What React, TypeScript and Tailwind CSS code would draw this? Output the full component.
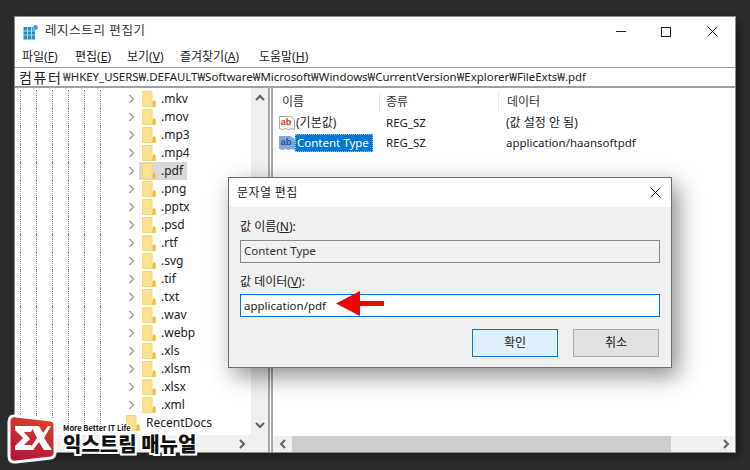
const treeItems = [".mkv", ".mov", ".mp3", ".mp4", ".pdf", ".png", ".pptx", ".psd", ".rtf", ".svg", ".tif", ".txt", ".wav", ".webp", ".xls", ".xlsm", ".xlsx", ".xml"];

const menus = [
    { label: "파일(", key: "F", width: "w-[53px]" },
    { label: "편집(", key: "E", width: "w-[52px]" },
    { label: "보기(", key: "V", width: "w-[53px]" },
    { label: "즐겨찾기(", key: "A", width: "w-[79px]" },
    { label: "도움말(", key: "H", width: "w-[60px]" },
];

const RegIcon = () => (
    <svg width="16" height="16" viewBox="0 0 16 16" className="shrink-0">
        <rect x="0.5" y="3" width="11.5" height="12.5" fill="#1c8fc4" />
        <path d="M0.5 7h11.5M0.5 11h11.5M4.5 3v12.5M8.5 3v12.5" stroke="#cfeaf6" strokeWidth="0.8" />
        <path d="M12.5 0.5l2.5 1.6v2.8l-2.5 1.6-2.5-1.6V2.1z" fill="#3aa7d4" stroke="#fff" strokeWidth="0.5" />
    </svg>
);

const Folder = () => (
    <svg width="14" height="16" viewBox="0 0 14 16" className="shrink-0">
        <path d="M0.5 0.5h9.5l0 11h3.5v4h-13z" fill="#fde28f" stroke="#f5d77e" />
        <path d="M10 15.5h3.5V9.5H11z" fill="#e9bf4f" />
    </svg>
);

const Chevron = () => (
    <svg width="8" height="10" viewBox="0 0 8 10" className="shrink-0">
        <path d="M1.5 1l4 4-4 4" fill="none" stroke="#a6a6a6" strokeWidth="1.6" />
    </svg>
);

const Guides = ({ count }: { count: number }) => (
    <>
        {Array.from({ length: count }).map((_, i) => (
            <span key={i} className="h-full w-4 shrink-0 border-l border-dotted border-[#8a8a8a]" />
        ))}
    </>
);

const TreeRow = ({ name }: { name: string }) => (
    <div className="flex h-[18px] items-center pl-[5px]">
        <Guides count={6} />
        <span className="h-full w-[12px] shrink-0" />
        <Chevron />
        <span className="w-[3px] shrink-0" />
        <div className={`flex h-full items-center pl-[3px] pr-[4px] ${name === ".pdf" ? "bg-[#d9d9d9]" : ""}`}>
            <Folder />
            <span className="ml-[5px] text-[12px] text-[#222]">{name}</span>
        </div>
    </div>
);

const AbIcon = ({ selected }: { selected?: boolean }) => (
    <svg width="16" height="16" viewBox="0 0 16 16" className="shrink-0">
        <path d="M0.5 1.5h11l4 3v10l-3-1-3 1-3-1-3 1-3-1z" fill={selected ? "#7fa8d8" : "#fff"} stroke={selected ? "#7fa8d8" : "#a8a8a8"} />
        <text x="1.5" y="10" fontSize="9.5" fontWeight="700" fontFamily="Liberation Sans, sans-serif" fill={selected ? "#2a4f9a" : "#c8461e"}>ab</text>
    </svg>
);

const Arrow = ({ dir }: { dir: "up" | "down" | "left" | "right" }) => {
    const d = {
        up: "M1 7l4-4 4 4",
        down: "M1 3l4 4 4-4",
        left: "M7 1L3 5l4 4",
        right: "M3 1l4 4-4 4",
    }[dir];
    return (
        <svg width="10" height="10" viewBox="0 0 10 10">
            <path d={d} fill="none" stroke="#606060" strokeWidth="2" />
        </svg>
    );
};

const XIcon = () => (
    <svg width="11" height="11" viewBox="0 0 11 11">
        <path d="M0.5 0.5l10 10M10.5 0.5l-10 10" stroke="#222" strokeWidth="1" />
    </svg>
);

const Logo = () => (
    <svg width="50" height="50" viewBox="0 0 50 50" className="shrink-0">
        <defs>
            <linearGradient id="logoRed" x1="0.7" y1="0" x2="0.3" y2="1">
                <stop offset="0" stopColor="#d8432a" />
                <stop offset="1" stopColor="#b5123c" />
            </linearGradient>
        </defs>
        <path d="M9 2l35 4q4 1 4 5v28q0 4-4 5L9 48q-7 1-7-6V8q0-7 7-6z" fill="url(#logoRed)" stroke="#fff" strokeWidth="3" />
        <path d="M8 12h19l-3 6H17l6 7-6 6h7l3 5H8v-4l8-8-8-8z" fill="#fff" />
        <path d="M24 12h8l4 7 5-7h3l-7 12 8 12h-8l-5-8-6 8h-4l8-12z" fill="#fff" />
    </svg>
);

export default function App() {
    return (
        <div className="relative h-[470px] w-[750px] overflow-hidden bg-[#2c2c2c] pl-[14px] pt-[16px] font-['Noto_Sans','Noto_Sans_CJK_KR',sans-serif] text-[11.5px] text-[#222]">
            {/* registry editor window */}
            <div className="flex h-[437px] w-[722px] flex-col border border-[#8c8c8c] bg-white shadow-[4px_4px_8px_rgba(0,0,0,0.4)]">
                <div className="flex h-[29px] shrink-0 items-center pl-[8px]">
                    <RegIcon />
                    <span className="ml-[6px] text-[12.5px] tracking-[0.6px] text-[#333]">레지스트리 편집기</span>
                    <div className="ml-auto flex items-center">
                        <div className="flex w-[45px] justify-center"><span className="h-px w-[10px] bg-[#222]" /></div>
                        <div className="flex w-[46px] justify-center"><span className="h-[10px] w-[10px] border border-[#222]" /></div>
                        <div className="flex w-[46px] justify-center"><XIcon /></div>
                    </div>
                </div>

                <div className="flex h-[21px] shrink-0 items-center pl-[7px] text-[12px]">
                    {menus.map((m) => (
                        <span key={m.key} className={m.width}>
                            {m.label}<span className="underline">{m.key}</span>)
                        </span>
                    ))}
                </div>

                <div className="flex h-[21px] shrink-0 items-center border-y border-y-[#a0a0a0] border-b-2 pl-[4px] text-[11.45px] text-[#222]">
                    <span className="w-[44px] shrink-0 whitespace-nowrap text-[14px] tracking-[1.6px]">컴퓨터</span>₩HKEY_USERS₩.DEFAULT₩Software₩Microsoft₩Windows₩CurrentVersion₩Explorer₩FileExts₩.pdf
                </div>

                <div className="flex min-h-0 flex-1">
                    {/* tree pane */}
                    <div className="flex w-[253px] shrink-0 flex-col">
                        <div className="flex min-h-0 flex-1">
                            <div className="min-w-0 flex-1 overflow-hidden pt-[2px]">
                                {treeItems.map((name) => (
                                    <TreeRow key={name} name={name} />
                                ))}
                                <div className="flex h-[18px] items-center pl-[5px]">
                                    <Guides count={6} />
                                    <span className="h-full w-[10px] shrink-0" />
                                    <Folder />
                                    <span className="ml-[6px] text-[12px]">RecentDocs</span>
                                </div>
                            </div>
                            <div className="flex w-[17px] shrink-0 flex-col items-center justify-between bg-[#f0f0f0] py-[5px]">
                                <Arrow dir="up" />
                                <Arrow dir="down" />
                            </div>
                        </div>
                        <div className="flex h-[17px] shrink-0 items-center justify-end bg-[#f0f0f0] pr-[21px]">
                            <Arrow dir="right" />
                        </div>
                    </div>

                    <div className="w-[5px] shrink-0 border-x-2 border-x-[#a8a8a8] bg-white" />

                    {/* values pane */}
                    <div className="flex min-w-0 flex-1 flex-col">
                        <div className="flex h-[25px] shrink-0 items-end pb-[2px] text-[12px] text-[#333]">
                            <span className="w-[107px] border-r border-[#e5e5e5] pl-[9px]">이름</span>
                            <span className="w-[119px] border-r border-[#e5e5e5] pl-[6px]">종류</span>
                            <span className="pl-[8px]">데이터</span>
                        </div>
                        <div className="flex h-[20px] items-center">
                            <div className="flex w-[105px] items-center pl-[6px]">
                                <AbIcon />
                                <span className="ml-px text-[12px]">(기본값)</span>
                            </div>
                            <span className="w-[121px] pl-[8px]">REG_SZ</span>
                            <span className="pl-[7px] text-[12px]">(값 설정 안 됨)</span>
                        </div>
                        <div className="flex h-[20px] items-center">
                            <div className="flex w-[105px] items-center pl-[6px]">
                                <AbIcon selected />
                                <span className="flex h-[18px] items-center border border-dotted border-[#8fc1ea] bg-[#0078d7] pl-px pr-[3px] text-white">Content Type</span>
                            </div>
                            <span className="w-[121px] pl-[8px]">REG_SZ</span>
                            <span className="pl-[7px]">application/haansoftpdf</span>
                        </div>
                        <div className="flex-1" />
                        <div className="flex h-[16px] shrink-0 items-center bg-[#f0f0f0] pr-[4px]">
                            <div className="flex w-[19px] justify-center"><Arrow dir="left" /></div>
                            <div className="h-full w-[379px] bg-[#cdcdcd]" />
                            <div className="ml-auto flex"><Arrow dir="right" /></div>
                        </div>
                    </div>
                </div>
            </div>

            {/* string edit dialog */}
            <div className="absolute left-[228px] top-[177px] flex h-[191px] w-[444px] flex-col border border-[#6e6e6e] bg-[#f0f0f0] shadow-[6px_8px_22px_rgba(0,0,0,0.45)]">
                <div className="flex h-[29px] shrink-0 items-center justify-between bg-white pl-[8px] pr-[10px]">
                    <span className="text-[12px] tracking-[0.4px]">문자열 편집</span>
                    <XIcon />
                </div>
                <div className="flex flex-1 flex-col px-[11px]">
                    <span className="mt-[11px] h-[22px] text-[12px]">값 이름(<span className="underline">N</span>):</span>
                    <div className="flex h-[23px] items-center border border-[#8a8a8a] bg-[#f0f0f0] pb-px pl-[3px] text-[#333]">Content Type</div>
                    <span className="mt-[10px] h-[21px] text-[12px]">값 데이터(<span className="underline">V</span>):</span>
                    <div className="relative flex h-[23px] items-center border border-[#0078d7] bg-white pl-[3px]">
                        application/pdf
                        <svg width="48" height="26" viewBox="0 0 48 26" className="absolute left-[95px] top-[-4px]">
                            <path d="M0 12.5L24 0v10h24v5H24v10z" fill="#f00000" />
                        </svg>
                    </div>
                    <div className="mt-[12px] flex justify-end gap-[15px] pr-px">
                        <button className="h-[28px] w-[86px] border border-[#0078d7] bg-[#e1effa] text-[12px]">확인</button>
                        <button className="h-[28px] w-[86px] border border-[#adadad] bg-[#e1e1e1] text-[12px]">취소</button>
                    </div>
                </div>
            </div>

            {/* watermark */}
            <div className="absolute left-[7px] top-[414px] flex items-start">
                <Logo />
                <div className="ml-[6px] flex flex-col font-['Noto_Sans_CJK_KR',sans-serif] font-bold leading-none text-[#111]">
                    <span className="mt-[10px] text-[7.5px] [-webkit-text-stroke:2px_white] [paint-order:stroke_fill]">More Better IT Life</span>
                    <span className="mt-[2px] text-[20px] font-black [-webkit-text-stroke:4px_white] [paint-order:stroke_fill]">익스트림 매뉴얼</span>
                </div>
            </div>
        </div>
    );
}
